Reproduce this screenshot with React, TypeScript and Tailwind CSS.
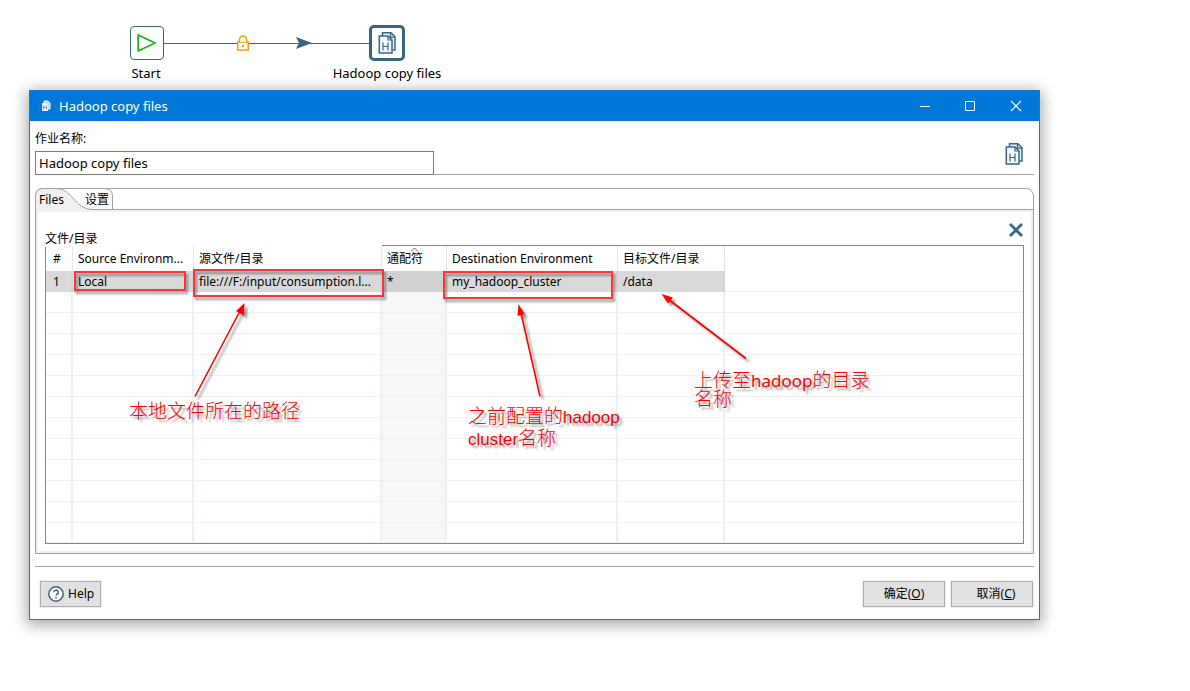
import React from "react";

const COLUMNS = [
  "#",
  "Source Environm...",
  "源文件/目录",
  "通配符",
  "Destination Environment",
  "目标文件/目录",
  "",
];

const ROW = ["1", "Local", "file:///F:/input/consumption.l...", "*", "my_hadoop_cluster", "/data"];

const BLANK_ROWS = Array.from({ length: 12 }, (_, i) => i);

function CopyFilesIcon({ className }: { className?: string }) {
  return (
    <svg viewBox="0 0 20 24" className={className} fill="none" aria-hidden="true">
      <path d="M5.500 5V1.700h8.500l4 4V19H15.500" fill="#e6f1f7" stroke="#3d6480" strokeWidth="1.5" />
      <path d="M13.500 2v4.200H18" stroke="#3d6480" strokeWidth="1.3" />
      <path d="M2.300 5H11l4 4v13H2.300z" fill="#f0f8fc" stroke="#3d6480" strokeWidth="1.5" />
      <path d="M11 5v4h4" stroke="#3d6480" strokeWidth="1.2" />
      <path d="M6 11.500v8M11 11.500v8M6 15.500h5" stroke="#3d6480" strokeWidth="1.2" />
    </svg>
  );
}

function JobCanvas() {
  return (
    <section className="relative h-[90px] text-[13px]" aria-label="Job">
      <svg className="absolute left-[164px] top-[30px] h-[26px] w-[206px]" viewBox="0 0 206 26" fill="none" aria-hidden="true">
        <path d="M0 13.5h206" stroke="#3d6480" />
        <rect x="73.75" y="12" width="10.5" height="8" fill="#fff" stroke="#ff9c0c" strokeWidth="1.5" />
        <path d="M75.500 12V9.500a3.500 3.500 0 0 1 7 0V12" fill="#fff" stroke="#ff9c0c" strokeWidth="1.5" />
        <rect x="78" y="15" width="2" height="2" fill="#ff9c0c" />
        <path d="M132 7l16 6-16 6 3-6z" fill="#3d6480" />
      </svg>
      <div className="absolute left-[130px] top-[26px] flex h-[34px] w-[34px] items-center justify-center rounded-[4px] border border-[#3d6480] bg-white">
        <svg viewBox="0 0 20 20" className="h-5 w-5" fill="none" aria-hidden="true">
          <path d="M1.200 2l17 8-17 8z" stroke="#18b318" strokeWidth="1.7" />
        </svg>
      </div>
      <div className="absolute left-[369px] top-[25px] flex h-9 w-9 items-center justify-center rounded-[5px] border-3 border-[#3d6480] bg-white">
        <CopyFilesIcon className="h-6 w-5" />
      </div>
      <span className="absolute left-[96px] top-[64px] w-[100px] text-center leading-[18px]">Start</span>
      <span className="absolute left-[317px] top-[64px] w-[140px] text-center leading-[18px]">Hadoop copy files</span>
    </section>
  );
}

function TitleBar() {
  return (
    <header className="flex h-[30px] items-center bg-[#0078d9] pl-[11px] text-white">
      <svg viewBox="0 0 10 12" className="h-3 w-[10px]" fill="none" aria-hidden="true">
        <path d="M3 1h4l2 2v6H3z" fill="#bfd8e8" stroke="#e8f3fa" />
        <path d="M1 3h4l2 2v6H1z" fill="#eaf5fb" />
        <path d="M2.500 5.500v4M5.500 5.500v4M2.500 7.500h3" stroke="#5b88a8" strokeWidth="0.8" />
      </svg>
      <h1 className="ml-2 flex-1 text-[13px]">Hadoop copy files</h1>
      <button aria-label="Minimize" className="flex h-full w-[45px] items-center justify-center pb-px">
        <svg viewBox="0 0 12 12" className="h-3 w-3" stroke="#fff" fill="none"><path d="M1 6.500h10" /></svg>
      </button>
      <button aria-label="Maximize" className="flex h-full w-[45px] items-center justify-center pb-px">
        <svg viewBox="0 0 12 12" className="h-3 w-3" stroke="#fff" fill="none"><path d="M1.500 1.500h9v9h-9z" /></svg>
      </button>
      <button aria-label="Close window" className="flex h-full w-[47px] items-center justify-center pb-px">
        <svg viewBox="0 0 12 12" className="h-3 w-3" stroke="#fff" strokeWidth="1.2" fill="none"><path d="M1 1l10 10M11 1L1 11" /></svg>
      </button>
    </header>
  );
}

function Tabs() {
  return (
    <div role="tablist" className="relative flex h-[21px] border-b border-[#a0a0a0]">
      <svg className="absolute -left-px -top-px h-[23px] w-[80px]" viewBox="0 0 80 23" fill="none" aria-hidden="true">
        <path d="M1 23V8Q1 1 8 1H22C36 1 40 21.500 57 21.500V23z" fill="#f0f0f0" />
        <path d="M.5 23V8Q.5 .5 8 .5H22C37 .5 40 21.500 57 21.500" stroke="#a0a0a0" />
        <path d="M70 .5Q77.500 1 77.500 8V21.500" stroke="#a0a0a0" />
      </svg>
      <button role="tab" aria-selected="true" className="relative w-[46px] pl-[3px] pt-px text-left">Files</button>
      <button role="tab" aria-selected="false" className="relative w-[31px] pl-[3px] pt-px text-left">设置</button>
    </div>
  );
}

function FilesTable() {
  return (
    <div className="relative border border-[#828790]">
      <div className="absolute -left-px -top-px h-[2px] w-[337px] bg-white" />
      <table className="w-full table-fixed border-separate border-spacing-0 text-left" aria-label="文件/目录">
        <colgroup>
          <col className="w-[27px]" />
          <col className="w-[121px]" />
          <col className="w-[188px]" />
          <col className="w-[65px]" />
          <col className="w-[171px]" />
          <col className="w-[107px]" />
          <col />
        </colgroup>
        <thead>
          <tr className="h-[25px]">
            {COLUMNS.map((name, i) => (
              <th
                key={i}
                scope="col"
                className={
                  i === 0
                    ? "border-r border-[#e2e6ee] p-0 pr-1 text-center font-normal"
                    : i === 6
                      ? "p-0"
                      : "relative truncate border-r border-[#e2e6ee] p-0 pl-[5px] font-normal"
                }
              >
                {i === 3 && (
                  <svg viewBox="0 0 9 5" className="absolute left-[28px] top-px h-[5px] w-[9px]" fill="none" stroke="#666">
                    <path d="M1 4.500l3.500-3.500 3.500 3.500" />
                  </svg>
                )}
                {name}
              </th>
            ))}
          </tr>
        </thead>
        <tbody>
          <tr className="h-[21px]">
            {ROW.map((value, i) => (
              <td
                key={i}
                className={
                  i === 0
                    ? "border-r-2 border-[#d2d4d8] bg-[#d9d9d9] p-0 pr-1 text-center"
                    : i === 3
                      ? "border-r-2 border-[#d2d4d8] bg-[#d1d1d1] p-0 pl-[5px]"
                      : "whitespace-nowrap border-r-2 border-[#d2d4d8] bg-[#d9d9d9] p-0 pl-[5px]"
                }
              >
                {value}
              </td>
            ))}
            <td className="border-b border-[#f0f0f0] p-0" />
          </tr>
          {BLANK_ROWS.map((row) => (
            <tr key={row} className="h-[21px] last:h-5">
              {COLUMNS.map((_, i) => (
                <td
                  key={i}
                  className={
                    i === 6
                      ? "border-b border-[#f0f0f0] p-0"
                      : i === 3
                        ? "border-b border-r-2 border-b-[#f0f0f0] border-r-[#ebf1fa] bg-[#f7f7f7] p-0"
                        : "border-b border-r-2 border-b-[#f0f0f0] border-r-[#ebf1fa] p-0"
                  }
                />
              ))}
            </tr>
          ))}
        </tbody>
      </table>
    </div>
  );
}

function Annotations() {
  return (
    <div className="pointer-events-none absolute left-0 top-0 text-[19px] font-light leading-[20px] text-[#f00]">
      <div className="absolute left-[44px] top-[180px] h-5 w-[112px] border-2 border-[#ff3333] drop-shadow-[2px_3px_1px_rgba(0,0,0,0.4)]" />
      <div className="absolute left-[163px] top-[178px] h-7 w-[191px] border-2 border-[#ff3333] drop-shadow-[2px_3px_1px_rgba(0,0,0,0.4)]" />
      <div className="absolute left-[413px] top-[180px] h-7 w-[170px] border-2 border-[#ff3333] drop-shadow-[2px_3px_1px_rgba(0,0,0,0.4)]" />
      <svg className="absolute left-0 top-0 h-[400px] w-[800px] drop-shadow-[3px_3px_1px_rgba(0,0,0,0.4)]" viewBox="30 91 800 400" fill="#f00" stroke="#f00" aria-hidden="true">
        <path d="M195 396.500L240 311M540 396.500L521 313M746 358.500L668 299" strokeWidth="1.6" fill="none" />
        <path d="M244.500 303l-8.500 8 8 4.500zM518.500 304l-1 12 7-2zM661.500 294l6.500 9.500 5-6z" stroke="none" />
      </svg>
      <p className="absolute left-[99px] top-[310px] whitespace-nowrap [text-shadow:3px_3px_2px_rgba(0,0,0,0.35)]">本地文件所在的路径</p>
      <p className="absolute left-[438px] top-[315px] whitespace-nowrap [text-shadow:3px_3px_2px_rgba(0,0,0,0.35)]">
        之前配置的<span className="font-['Liberation_Sans'] text-[17px] font-normal">hadoop</span>
        <br />
        <span className="font-['Liberation_Sans'] text-[17px] font-normal">cluster</span>名称
      </p>
      <p className="absolute left-[664px] top-[280px] whitespace-nowrap leading-[19px] [text-shadow:3px_3px_2px_rgba(0,0,0,0.35)]">
        上传至<span className="font-['Noto_Sans'] text-[17px] font-normal">hadoop</span>的目录
        <br />
        名称
      </p>
    </div>
  );
}

export default function App() {
  return (
    <main className="min-h-screen bg-white pb-[71px] font-['Noto_Sans','Noto_Sans_CJK_SC',sans-serif] text-[12px] leading-4 text-black">
      <JobCanvas />
      <section
        aria-label="Hadoop copy files"
        className="relative ml-[29px] mr-[150px] border border-[#1979ca] bg-white shadow-[0_3px_14px_2px_rgba(0,0,0,0.35)]"
      >
        <TitleBar />
        <div className="px-[5px] pb-3">
          <div className="flex items-end border-b border-[#a0a0a0] pt-[9px]">
            <div className="-mb-px w-[399px]">
              <label htmlFor="job-name" className="block h-[21px] leading-[18px]">作业名称:</label>
              <input
                id="job-name"
                defaultValue="Hadoop copy files"
                className="block h-6 w-full border border-[#7a7a7a] bg-white px-[3px] pb-px text-[13px] outline-none"
              />
            </div>
            <CopyFilesIcon className="mb-2 ml-auto mr-[10px] h-6 w-5" />
          </div>

          <div className="mt-[13px] rounded-t-[8px] border border-[#a0a0a0]">
            <Tabs />
            <div role="tabpanel" className="border-2 border-[#f0f0f0] px-[7px] pb-[7px] pt-[10px]">
              <div className="flex h-[23px] items-end justify-between">
                <span className="leading-3">文件/目录</span>
                <button aria-label="Delete" className="mb-[7px] flex h-4 w-4 items-center justify-center">
                  <svg viewBox="0 0 16 16" className="h-4 w-4" stroke="#3d6480" strokeWidth="2.8" fill="none">
                    <path d="M2 2l12 12M14 2L2 14" />
                  </svg>
                </button>
              </div>
              <FilesTable />
            </div>
          </div>

          <footer className="mt-3 flex gap-[6px] border-t border-[#a0a0a0] pt-[14px]">
            <button className="ml-[5px] mr-auto flex h-[26px] w-[61px] items-center gap-1 border border-[#adadad] bg-[#e1e1e1] pl-[7px] outline outline-[#f0f0f0]">
              <svg viewBox="0 0 16 16" className="h-4 w-4" fill="none" stroke="#3d6480" aria-hidden="true">
                <circle cx="8" cy="8" r="7.200" fill="#fff" strokeWidth="1.5" />
                <path d="M5.800 6.300a2.200 2.200 0 1 1 3.200 2c-.7.400-1 .7-1 1.500M8 11v1.400" strokeWidth="1.5" />
              </svg>
              Help
            </button>
            <button className="h-[26px] w-[82px] border border-[#adadad] bg-[#e1e1e1] outline outline-[#f0f0f0]">
              确定(<u>O</u>)
            </button>
            <button className="mr-px h-[26px] w-[82px] border border-[#adadad] bg-[#e1e1e1] pl-2 outline outline-[#f0f0f0]">
              取消(<u>C</u>)
            </button>
          </footer>
        </div>
        <Annotations />
      </section>
    </main>
  );
}
